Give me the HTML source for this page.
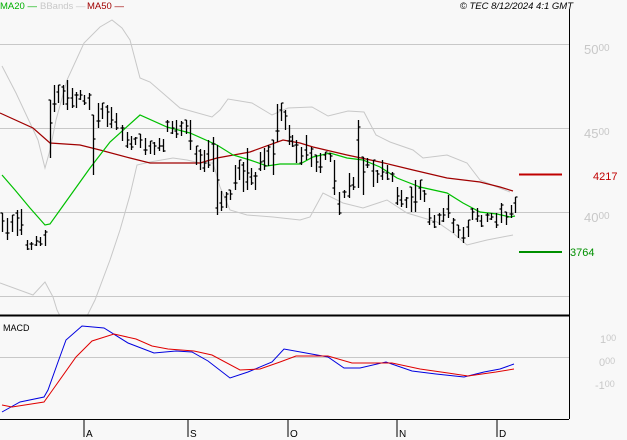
<!DOCTYPE html>
<html><head><meta charset="utf-8"><style>
body{margin:0;background:#f8f8f8;width:627px;height:440px;overflow:hidden;font-family:"Liberation Sans",sans-serif}
svg{position:absolute;left:0;top:0}
</style></head><body>
<svg width="627" height="440" viewBox="0 0 627 440" font-family="Liberation Sans, sans-serif">
<defs><clipPath id="top"><rect x="0" y="0" width="569" height="315"/></clipPath></defs>
<rect width="627" height="440" fill="#f8f8f8"/>
<g stroke="#c8c8c8" stroke-width="1">
<line x1="0" y1="44.5" x2="569" y2="44.5"/><line x1="0" y1="128.5" x2="569" y2="128.5"/>
<line x1="0" y1="212.5" x2="569" y2="212.5"/><line x1="0" y1="296.5" x2="569" y2="296.5"/>
<line x1="0" y1="357.5" x2="569" y2="357.5"/>
</g>
<g fill="none" stroke="#c8c8c8" stroke-width="1" clip-path="url(#top)">
<polyline points="2,66 16,93 38,140 45,168 50,150 56,120 67,80 84,43 100,27 112,20 122,28 130,40 140,78 150,82 165,95 180,108 212,117 220,110 228,99 252,103 272,115 288,108 312,107 328,116 348,111 364,112 376,135 390,142 413,150 423,158 447,155 467,163 480,180 497,187 510,192"/>
<polyline points="0,283 33,295 45,282 53,297 57,310 62,320 75,330 85,320 95,300 110,260 120,230 130,195 137,165 150,162 173,158 187,160 200,163 213,163 220,187 230,210 247,215 273,217 300,220 310,217 323,193 343,203 363,208 387,200 407,213 437,222 453,233 467,245 487,240 513,235"/>
</g>
<polyline fill="none" stroke="#a00000" stroke-width="1.2" points="0,113 33,128 50,143 80,145 100,150 130,158 150,163 200,163 217,158 250,152 283,140 300,143 313,147 347,155 380,162 413,170 447,178 480,182 500,187 513,191"/>
<polyline fill="none" stroke="#00c000" stroke-width="1.2" points="2,175 15,190 30,208 45,225 50,224 60,210 90,168 110,142 140,115 167,127 190,133 217,145 233,155 250,160 267,166 280,164 300,164 313,157 330,153 347,158 363,160 380,167 397,178 420,187 447,193 463,203 480,212 497,214 510,217 515,216"/>
<path id="bars" stroke="#000" stroke-width="1.3" fill="none" d=""/>
<line x1="569.5" y1="9" x2="569.5" y2="419" stroke="#000"/>
<line x1="0" y1="315.5" x2="569" y2="315.5" stroke="#000" stroke-width="2"/>
<line x1="0" y1="419.5" x2="569" y2="419.5" stroke="#000"/>
<g stroke="#000"><line x1="84" y1="419" x2="84" y2="437"/><line x1="188" y1="419" x2="188" y2="437"/><line x1="288" y1="419" x2="288" y2="437"/><line x1="397" y1="419" x2="397" y2="437"/><line x1="497" y1="419" x2="497" y2="437"/></g>
<g font-size="10" fill="#000"><text x="86" y="437">A</text><text x="190" y="437">S</text><text x="290" y="437">O</text><text x="399" y="437">N</text><text x="499" y="437">D</text></g>
<polyline fill="none" stroke="#0000e0" stroke-width="1" points="2,412 20,402 44,397 48,390 58,362 66,340 82,326 104,328 128,343 154,353 176,351 192,352 208,361 230,378 248,372 272,362 284,349 306,353 328,357 344,368 360,368 386,362 412,371 436,374 464,377 484,372 500,369 514,364"/>
<polyline fill="none" stroke="#e00000" stroke-width="1" points="2,405 12,407 44,402 54,388 76,357 92,341 114,334 136,339 152,346 168,349 194,351 212,355 240,370 260,369 280,362 296,356 328,356 352,363 392,363 420,369 448,373 468,376 496,372 514,369"/>
<text x="3" y="331" font-size="9" fill="#000">MACD</text>
<line x1="519" y1="174.5" x2="562" y2="174.5" stroke="#c00000" stroke-width="2"/>
<text x="593" y="180" font-size="11" fill="#c00000">4217</text>
<line x1="519" y1="252" x2="562" y2="252" stroke="#009000" stroke-width="2"/>
<text x="570" y="256" font-size="11" fill="#009000">3764</text>
<g font-size="13" fill="#c8c8c8">
<text x="584" y="54">50<tspan font-size="10" dy="-3">00</tspan></text>
<text x="584" y="138">45<tspan font-size="10" dy="-3">00</tspan></text>
<text x="584" y="222">40<tspan font-size="10" dy="-3">00</tspan></text>
</g>
<g font-size="11" fill="#c8c8c8">
<text x="600" y="343">1<tspan font-size="9" dy="-2">00</tspan></text>
<text x="599" y="366">0<tspan font-size="9" dy="-2">00</tspan></text>
<text x="595" y="389">-1<tspan font-size="9" dy="-2">00</tspan></text>
</g>
<g font-size="9.5">
<text x="0" y="9" fill="#00b000">MA20 —</text>
<text x="40" y="9" fill="#c8c8c8">BBands —</text>
<text x="87" y="9" fill="#a00000">MA50 —</text>
<text x="573" y="9" fill="#000" font-style="italic" text-anchor="end">© TEC 8/12/2024 4:1 GMT</text>
</g>
</svg>
<script>
var b=[[2,213,232],[7,218,240],[12,215,232],[17,210,236],[21,209,235],[27,240,250],[31,242,250],[36,236,246],[40,237,246],[45,230,246],[50,100,158],[54,85,112],[58,85,103],[63,85,105],[67,80,110],[72,88,108],[76,92,108],[80,90,100],[84,95,105],[89,93,110],[93,115,175],[98,103,128],[102,103,119],[107,105,127],[111,107,128],[116,113,130],[122,125,141],[127,132,148],[131,136,150],[135,137,145],[140,134,148],[145,138,155],[150,141,154],[154,142,155],[159,138,151],[163,139,152],[167,120,132],[172,121,134],[176,120,138],[181,121,136],[186,120,134],[190,120,150],[196,146,165],[200,149,170],[204,150,172],[208,140,168],[213,137,172],[217,145,215],[221,191,211],[226,192,208],[230,190,200],[235,165,190],[239,160,180],[243,162,192],[247,148,190],[251,168,185],[255,172,190],[260,152,171],[264,148,170],[268,145,166],[273,140,175],[277,104,142],[281,103,121],[285,110,130],[289,125,145],[292,135,147],[296,140,163],[301,147,165],[306,135,160],[311,147,167],[316,155,172],[320,153,173],[325,152,160],[330,153,162],[334,160,195],[339,192,215],[344,190,198],[349,173,198],[353,177,190],[358,120,188],[363,157,195],[367,158,168],[373,160,187],[377,170,183],[382,160,180],[387,165,180],[392,172,182],[397,187,205],[401,190,207],[406,197,208],[411,187,212],[415,180,212],[420,180,200],[424,190,202],[429,208,225],[434,215,228],[439,213,225],[443,208,222],[448,195,218],[453,218,233],[458,225,238],[463,227,243],[468,220,237],[472,208,220],[477,208,222],[481,215,227],[487,213,222],[491,213,220],[496,213,228],[501,203,223],[506,212,225],[511,205,218],[515,197,213]];
var d="";b.forEach(function(a,i){var x=a[0]+.5,o=a[1]+(a[2]-a[1])*((i*7)%10)/10,c=a[1]+(a[2]-a[1])*((i*3+4)%10)/10;d+="M"+x+" "+a[1]+"V"+a[2]+"M"+(x-2)+" "+o.toFixed(0)+"h2M"+x+" "+c.toFixed(0)+"h2";});
document.getElementById("bars").setAttribute("d",d);
</script>
</body></html>
